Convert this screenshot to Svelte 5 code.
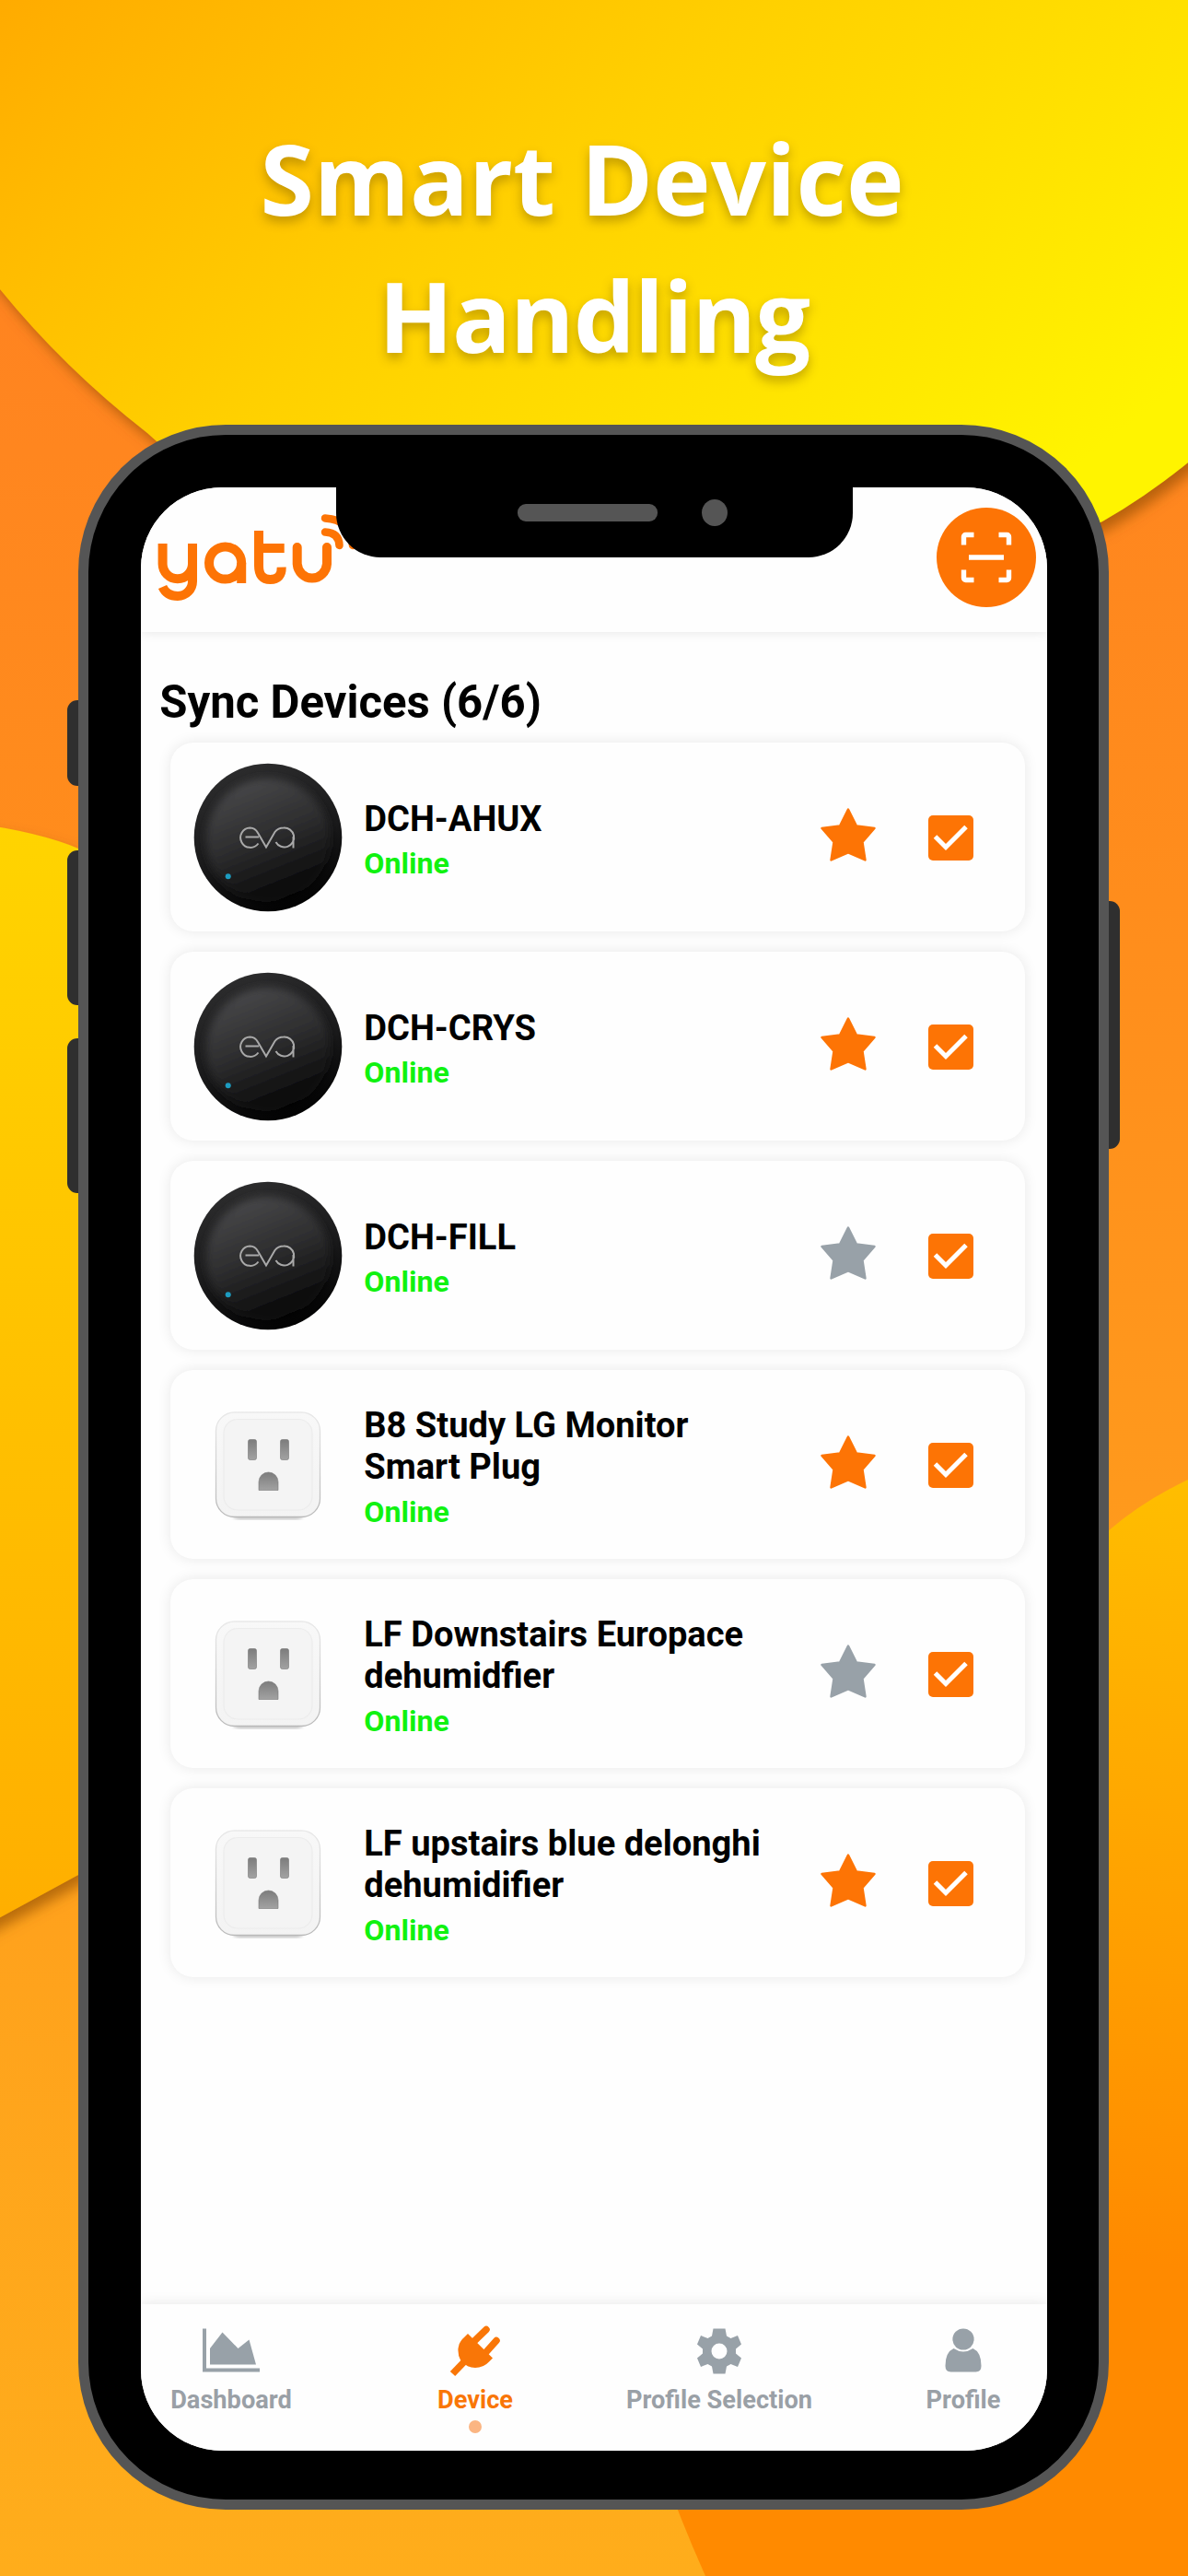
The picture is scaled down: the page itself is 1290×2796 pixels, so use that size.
<script>
  const devices = [
    { name: ['DCH-AHUX'], kind: 'hub', fav: true },
    { name: ['DCH-CRYS'], kind: 'hub', fav: true },
    { name: ['DCH-FILL'], kind: 'hub', fav: false },
    { name: ['B8 Study LG Monitor', 'Smart Plug'], kind: 'plug', fav: true },
    { name: ['LF Downstairs Europace', 'dehumidfier'], kind: 'plug', fav: false },
    { name: ['LF upstairs blue delonghi', 'dehumidifier'], kind: 'plug', fav: true },
  ];
  const tabs = ['Dashboard', 'Device', 'Profile Selection', 'Profile'];
</script>

<div class="poster">
  <svg class="backdrop" viewBox="0 0 1290 2796" aria-hidden="true">
    <defs>
      <linearGradient id="base" x1="0" y1="0" x2="0" y2="1">
        <stop offset="0" stop-color="#ff7f22" />
        <stop offset="0.35" stop-color="#ff8d1c" />
        <stop offset="0.75" stop-color="#ffa21c" />
        <stop offset="1" stop-color="#ffad1b" />
      </linearGradient>
      <linearGradient id="sun" gradientUnits="userSpaceOnUse" x1="0" y1="0" x2="700" y2="900">
        <stop offset="0" stop-color="#ffab00" />
        <stop offset="0.45" stop-color="#ffd000" />
        <stop offset="0.98" stop-color="#fff400" />
      </linearGradient>
      <linearGradient id="left" x1="0" y1="0" x2="0" y2="1">
        <stop offset="0" stop-color="#ffd400" />
        <stop offset="1" stop-color="#ffae00" />
      </linearGradient>
      <linearGradient id="right" gradientUnits="userSpaceOnUse" x1="1290" y1="1600" x2="1180" y2="2450">
        <stop offset="0" stop-color="#ffbe00" />
        <stop offset="1" stop-color="#ff8a00" />
      </linearGradient>
      <filter id="soft" x="-20%" y="-20%" width="140%" height="140%">
        <feDropShadow dx="6" dy="9" stdDeviation="7" flood-color="#8a4a00" flood-opacity="0.6" />
      </filter>
    </defs>
    <rect width="1290" height="2796" fill="url(#base)" />
    <path d="M-40 892 Q40 902 85 921 L500 1100 L500 1800 Q250 1960 85 2035 L-40 2103Z" fill="url(#left)" filter="url(#soft)" />
    <path d="M1290 1606 Q1240 1630 1203 1662 L600 2200 Q660 2560 766 2796 L1290 2796Z" fill="url(#right)" />
    <path d="M-60 -60 H1350 V450 Q1270 525 1197 566 Q900 700 600 690 Q300 600 160 470 Q70 400 0 314 L-60 240Z" fill="url(#sun)" filter="url(#soft)" />
  </svg>

  <h1><span class="first">Smart Device</span><span>Handling</span></h1>

  <div class="phone">
    <i class="key k1"></i><i class="key k2"></i><i class="key k3"></i><i class="key k4"></i>
    <div class="notch"><i class="speaker"></i><i class="camera"></i></div>
    <div class="screen">
      <header>
        <svg class="logo" viewBox="170 555 220 100" role="img" aria-label="yatu">
          <g fill="none" stroke="#fd7405" stroke-width="10">
            <path d="M177.600 590V612a16.200 16.200 0 0 0 32.400 0V590M210 610V631a16 16 0 0 1-16 16q-12 0-16.500-10" />
            <circle cx="245.600" cy="611" r="17.600" />
            <path d="M263.200 611V633" />
            <path d="M282 576V614Q282 629 294.500 629T306.700 615.700M282 595H309.700" />
            <path d="M323.700 594V612a16.200 16.800 0 0 0 32.300 0V594" stroke-linecap="round" />
            <path d="M354 577.500Q369 578 369.500 592M354 562.500Q383 564 384 592" stroke-width="8.500" stroke-linecap="round" />
          </g>
        </svg>
        <button class="scan" aria-label="Scan">
          <svg viewBox="0 0 56 56" fill="none" stroke="#fff" stroke-width="5.400">
            <path d="M3.500 14.500V5.500a2 2 0 0 1 2-2h9M41.500 3.500h9a2 2 0 0 1 2 2v9M52.500 41.500v9a2 2 0 0 1-2 2h-9M14.500 52.500h-9a2 2 0 0 1-2-2v-9M9 28H47" />
          </svg>
        </button>
      </header>

      <main>
        <h2>Sync Devices (6/6)</h2>
        <div class="list">
          {#each devices as d}
            <article>
              <div class="pic">
                {#if d.kind === 'hub'}
                  <svg class="hub" width="162" height="162" viewBox="0 0 162 162">
                    <defs>
                      <linearGradient id="rim" x1="0.350" y1="0" x2="0.700" y2="1">
                        <stop offset="0" stop-color="#2c2c2d" /><stop offset="0.550" stop-color="#19191a" /><stop offset="1" stop-color="#000" />
                      </linearGradient>
                      <linearGradient id="face" x1="0.300" y1="0" x2="0.700" y2="1">
                        <stop offset="0" stop-color="#49494b" /><stop offset="0.500" stop-color="#2b2b2c" /><stop offset="0.950" stop-color="#060606" />
                      </linearGradient>
                      <filter id="blurFace"><feGaussianBlur stdDeviation="4" /></filter>
                    </defs>
                    <circle cx="81" cy="81" r="80.300" fill="url(#rim)" />
                    <circle cx="81" cy="84" r="67" fill="url(#face)" filter="url(#blurFace)" />
                    <g fill="none" stroke="#a9a9a9" stroke-width="2">
                      <path d="M56.500 80.500H71M70.500 87.500A10.700 10.700 0 1 1 61.500 70.500Q67 70.500 70 76L79 91.500 88.500 75Q92 70.500 98 70.500A10.500 10.500 0 1 1 89.500 86M108.500 80V92.500" />
                    </g>
                    <circle cx="37.700" cy="123.300" r="3" fill="#1d9cc0" />
                  </svg>
                {:else}
                  <svg width="130" height="134" viewBox="0 0 130 134">
                    <defs>
                      <linearGradient id="shell" x1="0" y1="0" x2="0" y2="1">
                        <stop offset="0" stop-color="#f8f8f8" /><stop offset="1" stop-color="#f3f3f3" />
                      </linearGradient>
                      <linearGradient id="edge" x1="0" y1="0" x2="0" y2="1">
                        <stop offset="0" stop-color="#e9e9e9" /><stop offset="1" stop-color="#b9b9b9" />
                      </linearGradient>
                      <linearGradient id="hole" x1="0" y1="0" x2="0" y2="1">
                        <stop offset="0" stop-color="#7c7c7c" /><stop offset="1" stop-color="#a2a2a2" />
                      </linearGradient>
                      <filter id="drop"><feGaussianBlur stdDeviation="2.500" /></filter>
                    </defs>
                    <rect x="28" y="116" width="74" height="10" rx="5" fill="#000" opacity="0.250" filter="url(#drop)" />
                    <rect x="8.500" y="10" width="113" height="113.500" rx="20" fill="url(#shell)" stroke="url(#edge)" stroke-width="1.300" />
                    <rect x="17" y="17.500" width="96" height="98.500" rx="15" fill="#f4f4f4" stroke="#ececec" stroke-width="1.200" />
                    <g fill="url(#hole)" stroke="#777" stroke-width="0.600">
                      <rect x="43.500" y="39.500" width="9" height="22" rx="2" />
                      <rect x="78.500" y="39.500" width="9" height="22" rx="2" />
                      <path d="M55 94.500V85.500a10.500 10.500 0 0 1 21 0V94.500Z" />
                    </g>
                  </svg>
                {/if}
              </div>
              <div class="info">
                {#each d.name as line}<b>{line}</b>{/each}
                <span class="status">Online</span>
              </div>
              <svg class="star" class:off={!d.fav} viewBox="0 0 60 58">
                <path d="M30 1.500 39 19.500 58.500 22 45.500 37 48.500 56.500 30 48.500 11.500 56.500 14.500 37 1.500 22 21 19.500Z" stroke-width="2.400" stroke-linejoin="round" />
              </svg>
              <svg class="check" viewBox="0 0 49 49">
                <rect width="49" height="49" rx="5" fill="#fd7405" />
                <path d="M7.500 23 19 34.500 41 12.500" fill="none" stroke="#fff" stroke-width="5" />
              </svg>
            </article>
          {/each}
        </div>
      </main>

      <nav>
        {#each tabs as t, i}
          <div class="tab" class:active={i === 1}>
            {#if i === 0}
              <svg width="62" height="60" viewBox="0 0 62 60" fill="currentColor">
                <path d="M0 5.500H4V48.500H62V52.500H0ZM8 27 21.500 9.500 38.500 27 50.500 17.500 58 44.500H8Z" />
              </svg>
            {:else if i === 1}
              <svg width="56" height="60" viewBox="0 0 56 60" fill="none" stroke="currentColor">
                <path d="M25 21 40 6.500M38 33 51 18.500" stroke-width="7.500" stroke-linecap="round" />
                <path d="M3.500 54.500 16 41.500" stroke-width="7.500" />
                <path d="M20 11 47 37.500 43 41.500Q37 48 28 48 22 48 18 45L12 39.500Q9 34 9.500 27 10 20 16 15Z" fill="currentColor" stroke="none" />
              </svg>
            {:else if i === 2}
              <svg width="60" height="60" viewBox="-30 -30 60 60" fill="currentColor">
                <path fill-rule="evenodd" d="M-6.500-24.500H6.500L8-16.500 12.500-14 20-17 24-7.500 18-2.500V2.500L24 7.500 20 17 12.500 14 8 16.500 6.500 24.500H-6.500L-8 16.500-12.500 14-20 17-24 7.500-18 2.500V-2.500L-24-7.500-20-17-12.500-14-8-16.500ZM0-8.500A8.500 8.500 0 1 0 0 8.500 8.500 8.500 0 1 0 0-8.500Z" />
              </svg>
            {:else}
              <svg width="40" height="60" viewBox="0 0 40 60" fill="currentColor">
                <circle cx="20" cy="17" r="11.600" />
                <path d="M9.500 27Q20 34 30.500 27 39.500 31 39.500 46 39.500 52.500 33.500 52.500H6.500Q.5 52.500.5 46 .5 31 9.500 27Z" />
              </svg>
            {/if}
            <span>{t}</span>
            {#if i === 1}<i class="dot"></i>{/if}
          </div>
        {/each}
      </nav>
    </div>
  </div>
</div>

<style>
  :global(body) { margin: 0; }
  .poster {
    position: relative; width: 1290px; height: 2796px; overflow: hidden;
    display: flex; flex-direction: column; align-items: center;
    font-family: Roboto, sans-serif;
  }
  .poster * { box-sizing: border-box; }
  .backdrop { position: absolute; inset: 0; width: 1290px; height: 2796px; }
  h1 {
    position: relative; margin: 0; padding-top: 119px; height: 461px; width: 100%;
    display: flex; flex-direction: column; align-items: center;
    font: 700 106px/149px "Open Sans", sans-serif; color: #fff; letter-spacing: -1px;
    text-shadow: 0 6px 12px rgba(120, 90, 0, 0.45);
  }
  h1 .first { margin-right: 26px; letter-spacing: 0; }
  .phone {
    position: relative; width: 1118.500px; height: 2263px; margin-right: 1px;
    border: 11.500px solid #555; border-radius: 160px; background: #000;
    padding: 57px 55px 53px 57px;
  }
  .key { position: absolute; width: 12px; background: #2f2f2f; border-radius: 11px 0 0 11px; left: -23.500px; }
  .k1 { top: 288px; height: 93px; }
  .k2 { top: 451px; height: 168px; }
  .k3 { top: 655px; height: 168px; }
  .k4 { top: 506px; height: 269px; left: auto; right: -23.500px; border-radius: 0 11px 11px 0; }
  .notch {
    position: absolute; z-index: 2; left: 269px; top: 52px; width: 561px; height: 81px;
    background: #000; border-radius: 0 0 48px 48px;
  }
  .speaker { position: absolute; left: 197px; top: 23px; width: 152px; height: 19px; border-radius: 9px; background: #555; }
  .camera { position: absolute; left: 397px; top: 18px; width: 28px; height: 29px; border-radius: 50%; background: #555; }
  .screen {
    width: 983.500px; height: 2131px; border-radius: 88px; background: #fefefe; overflow: hidden;
    display: flex; flex-direction: column;
  }
  header {
    height: 157px; flex: none; display: flex; justify-content: space-between; align-items: flex-start;
    padding: 22px 12px 0 16px; background: #fefefe; box-shadow: 0 0 12px rgba(0, 0, 0, 0.1);
  }
  .logo { width: 220px; height: 100px; margin-top: 4px; }
  .scan {
    width: 108px; height: 108px; border: 0; border-radius: 50%; background: #fd7405; padding: 0;
    display: grid; place-items: center;
  }
  .scan svg { width: 56px; height: 56px; }
  main { flex: 1; padding: 46px 24px 0 32px; }
  h2 { margin: 0; margin-left: -12px; font-size: 49.100px; line-height: 60px; font-weight: 700; color: #000; height: 74px; white-space: nowrap; }
  .list { display: flex; flex-direction: column; gap: 22px; }
  article {
    height: 205px; border-radius: 25px; background: #fefefe; display: flex; align-items: center;
    box-shadow: 0 0 15px rgba(0, 0, 0, 0.09);
  }
  .pic { width: 210px; padding-left: 1px; display: flex; justify-content: center; }
  .hub { margin-top: 1px; }
  .info { flex: 1; padding-top: 5.500px; display: flex; flex-direction: column; color: #000; }
  .info b { font-size: 38.100px; line-height: 45.300px; font-weight: 700; white-space: nowrap; }
  .status { margin-top: 6px; font-size: 32.200px; line-height: 38px; font-weight: 700; color: #10f210; }
  .star { width: 60px; height: 58px; margin: 0 57px 5px 0; fill: #fd7405; stroke: #fd7405; }
  .star.off { fill: #98a1a8; stroke: #98a1a8; }
  .check { width: 49px; height: 49px; margin-right: 56px; margin-top: 2px; }
  nav {
    flex: none; height: 159px; background: #fefefe; box-shadow: 0 0 14px rgba(0, 0, 0, 0.1);
    display: grid; grid-template-columns: repeat(4, 265px); justify-content: center; padding: 21px 0 0 7px;
  }
  .tab { display: flex; flex-direction: column; align-items: center; color: #98a1a8; font-weight: 700; font-size: 27.200px; line-height: 32px; }
  .tab span { margin-top: 7px; color: #9aa0a6; white-space: nowrap; }
  .tab.active, .tab.active span { color: #f97607; }
  .dot { width: 14px; height: 14px; border-radius: 50%; background: #fbb582; margin-top: 6px; }
</style>
